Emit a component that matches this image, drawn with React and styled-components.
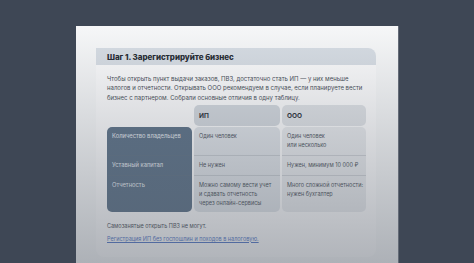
import React from 'react'
import styled, { createGlobalStyle } from 'styled-components'

const Global = createGlobalStyle`
  html, body { margin: 0; padding: 0; }
  html { height: 263px; overflow: hidden; }
  body {
    background: #3e4755;
    font-family: Inter, "Noto Sans", sans-serif;
    height: 263px;
    overflow: hidden;
  }
`

const Page = styled.div`
  padding: 26px 0 0 76px;
  height: 237px;
`

const Panel = styled.div`
  position: relative;
  width: 322px;
  height: 237px;
  background: #f6f7f8;
  padding: 22px 0 0 20px;
  box-sizing: border-box;
  overflow: hidden;
  box-shadow: 1px 0 0 rgba(255, 255, 255, 0.2);
  /* fade over the lower part of the dialog */
  &::after {
    content: '';
    position: absolute;
    inset: 0;
    pointer-events: none;
    background: linear-gradient(180deg, rgba(80, 88, 100, 0) 0%, rgba(80, 88, 100, 0.07) 15%, rgba(80, 88, 100, 0.22) 48%, rgba(80, 88, 100, 0.44) 100%);
  }
`

const Card = styled.div`
  width: 280px;
  height: 209px;
  background: #fbfbfc;
  border-radius: 0 8px 8px 8px;
`

const Header = styled.div`
  height: 17px;
  background: #d7dde4;
  border-radius: 0 8px 0 0;
  display: flex;
  align-items: center;
  padding-left: 11px;
`

const Title = styled.h2`
  margin: 0;
  font-size: 8px;
  font-weight: 800;
  color: #242931;
  letter-spacing: -0.05px;
`

const Body = styled.div`
  padding: 9px 11px 0 11px;
`

const Text = styled.p`
  margin: 0;
  font-size: ${p => (p.$small ? '5.5px' : '6px')};
  line-height: 9.4px;
  color: #474d56;
  white-space: nowrap;
`

const Link = styled.a`
  display: block;
  margin-top: 3px;
  font-size: 5.5px;
  line-height: 9.4px;
  color: #5277c8;
  text-decoration: underline;
  white-space: nowrap;
`

const Table = styled.div`
  display: grid;
  grid-template-columns: 85px 86px 84px;
  column-gap: 2px;
  margin-top: 3px;
  margin-bottom: 10px;
`

const Column = styled.div`
  display: flex;
  flex-direction: column;
  gap: 1px;
`

const HeadCell = styled.div`
  height: 21px;
  border-radius: 5px;
  background: ${p => (p.$empty ? 'transparent' : p.$bg)};
  display: flex;
  align-items: center;
  padding-left: 5px;
  font-size: 6.5px;
  font-weight: 700;
  color: #2a2f37;
`

const ColBody = styled.div`
  border-radius: 5px;
  background: ${p => p.$bg};
  overflow: hidden;
`

const Cell = styled.div`
  height: ${p => p.$h}px;
  box-sizing: border-box;
  padding: 5px 5px 0 5px;
  font-size: ${p => (p.$dark ? '5.8px' : '5.5px')};
  line-height: 8.8px;
  white-space: nowrap;
  color: ${p => (p.$dark ? '#e4e9ef' : '#4a5159')};
  & + & {
    border-top: 1px solid ${p => (p.$dark ? 'rgba(255,255,255,0.2)' : 'rgba(110,118,128,0.22)')};
  }
`

const rowHeights = [28, 20, 37]

const columns = [
  {
    head: null,
    bg: '#5c7187',
    dark: true,
    cells: ['Количество владельцев', 'Уставный капитал', 'Отчетность'],
  },
  {
    head: 'ИП',
    headBg: '#d3d8de',
    bg: '#dfe3e8',
    cells: ['Один человек', 'Не нужен', ['Можно самому вести учет', 'и сдавать отчетность', 'через онлайн-сервисы']],
  },
  {
    head: 'ООО',
    headBg: '#dfe2e6',
    bg: '#e8eaed',
    cells: [['Один человек', 'или несколько'], 'Нужен, минимум 10 000 ₽', ['Много сложной отчетности:', 'нужен бухгалтер']],
  },
]

export default function App() {
  return (
    <Page>
      <Global />
      <Panel>
        <Card>
          <Header>
            <Title>Шаг 1. Зарегистрируйте бизнес</Title>
          </Header>
          <Body>
            <Text>
              Чтобы открыть пункт выдачи заказов, ПВЗ, достаточно стать ИП — у них меньше
              <br />
              налогов и отчетности. Открывать ООО рекомендуем в случае, если планируете вести
              <br />
              бизнес с партнером. Собрали основные отличия в одну таблицу.
            </Text>
            <Table>
              {columns.map((col, i) => (
                <Column key={i}>
                  <HeadCell $empty={!col.head} $bg={col.headBg}>{col.head}</HeadCell>
                  <ColBody $bg={col.bg}>
                    {col.cells.map((c, j) => (
                      <Cell key={j} $h={rowHeights[j]} $dark={col.dark}>
                        {Array.isArray(c)
                          ? c.map((line, k) => (
                              <React.Fragment key={k}>
                                {k > 0 && <br />}
                                {line}
                              </React.Fragment>
                            ))
                          : c}
                      </Cell>
                    ))}
                  </ColBody>
                </Column>
              ))}
            </Table>
            <Text $small>Самозанятые открыть ПВЗ не могут.</Text>
            <Link href="#">Регистрация ИП без госпошлин и походов в налоговую.</Link>
          </Body>
        </Card>
      </Panel>
    </Page>
  )
}
